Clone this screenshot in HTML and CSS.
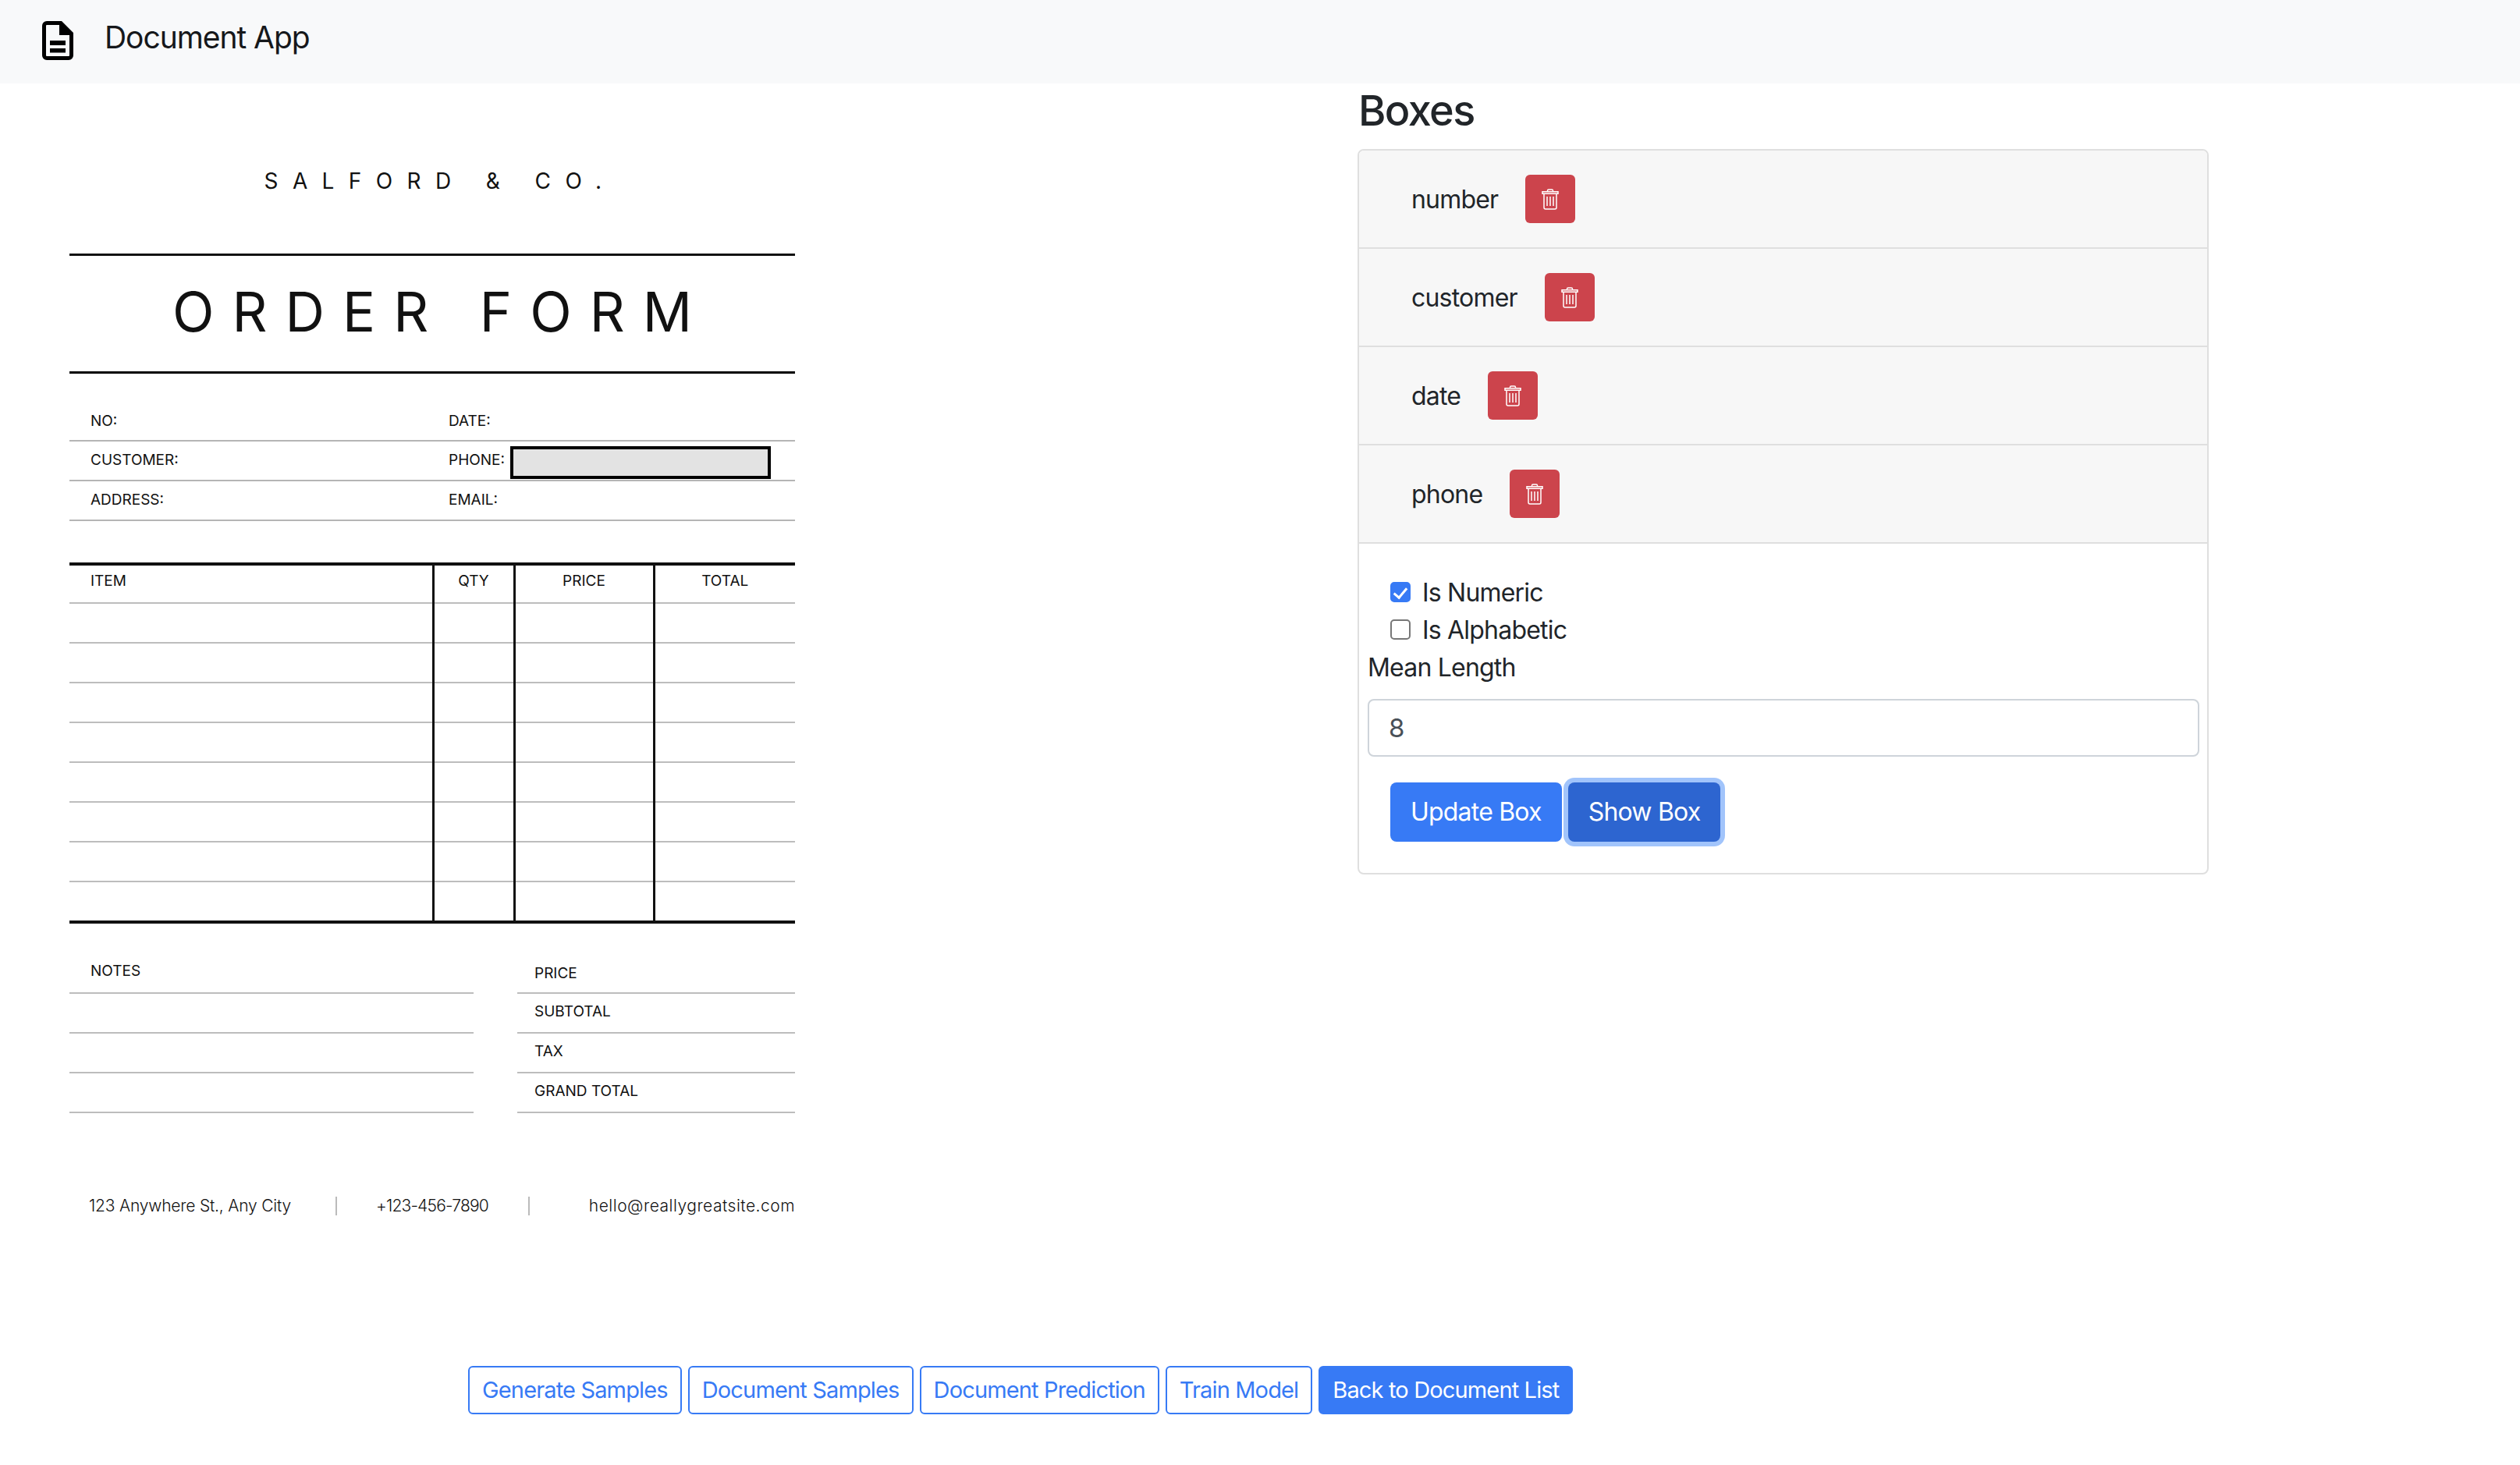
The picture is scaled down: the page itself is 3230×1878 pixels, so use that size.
FILE: index.html
```html
<!DOCTYPE html>
<html lang="en">
	<head>
		<meta charset="utf-8">
		<title>Document App</title>
		<link rel="stylesheet" href="styles.css">
	</head>
	<body>
		<svg class="sprites" width="0" height="0" aria-hidden="true">
			<symbol id="trash" viewBox="0 0 22 27">
				<path d="M1 3.8H21V6.2H1ZM7.5 3.8V2.5Q7.5 1 9 1H13Q14.5 1 14.5 2.5V3.8M3 6.2V24Q3 26 5 26H17Q19 26 19 24V6.2M7 10V22M11 10V22M15 10V22" fill="none" stroke="currentColor" stroke-width="1.5"/>
			</symbol>
		</svg>
		<nav class="navbar">
			<svg class="navbar-icon" viewBox="0 0 40 50" aria-hidden="true">
				<path fill-rule="evenodd" d="M6 0H25L40 15V44A6 6 0 0 1 34 50H6A6 6 0 0 1 0 44V6A6 6 0 0 1 6 0ZM6 5A1 1 0 0 0 5 6V44A1 1 0 0 0 6 45H34A1 1 0 0 0 35 44V18H22V5Z"/>
				<rect x="10" y="25" width="20" height="6"/>
				<rect x="10" y="35" width="20" height="5.5"/>
			</svg>
			<span class="navbar-title">Document App</span>
		</nav>

		<main class="workspace">
			<section class="sheet-col" aria-label="Document preview">
				<div class="sheet">
					<div class="sheet-brand">SALFORD &amp; CO.</div>
					<h1 class="sheet-title">ORDER FORM</h1>

					<div class="info">
						<div class="info-row"><span>NO:</span><span>DATE:</span></div>
						<div class="info-row"><span>CUSTOMER:</span><span>PHONE:</span></div>
						<div class="info-row"><span>ADDRESS:</span><span>EMAIL:</span></div>
						<div class="highlight"></div>
					</div>

					<table class="items">
						<thead>
							<tr><th class="item-col">ITEM</th><th>QTY</th><th>PRICE</th><th>TOTAL</th></tr>
						</thead>
						<tbody>
							<tr><td></td><td></td><td></td><td></td></tr>
							<tr><td></td><td></td><td></td><td></td></tr>
							<tr><td></td><td></td><td></td><td></td></tr>
							<tr><td></td><td></td><td></td><td></td></tr>
							<tr><td></td><td></td><td></td><td></td></tr>
							<tr><td></td><td></td><td></td><td></td></tr>
							<tr><td></td><td></td><td></td><td></td></tr>
							<tr><td></td><td></td><td></td><td></td></tr>
						</tbody>
					</table>

					<div class="summary">
						<div class="notes">
							<div>NOTES</div>
							<div></div>
							<div></div>
							<div></div>
						</div>
						<div class="totals">
							<div>PRICE</div>
							<div>SUBTOTAL</div>
							<div>TAX</div>
							<div>GRAND TOTAL</div>
						</div>
					</div>

					<div class="sheet-foot">
						<span class="foot-address">123 Anywhere St., Any City</span>
						<span class="foot-phone">+123-456-7890</span>
						<span class="foot-mail">hello@reallygreatsite.com</span>
					</div>
				</div>
			</section>

			<section class="boxes">
				<h2>Boxes</h2>
				<div class="card">
					<div class="box-row">
						<span>number</span>
						<button class="btn-delete" aria-label="Delete number"><svg><use href="#trash"/></svg></button>
					</div>
					<div class="box-row">
						<span>customer</span>
						<button class="btn-delete" aria-label="Delete customer"><svg><use href="#trash"/></svg></button>
					</div>
					<div class="box-row">
						<span>date</span>
						<button class="btn-delete" aria-label="Delete date"><svg><use href="#trash"/></svg></button>
					</div>
					<div class="box-row">
						<span>phone</span>
						<button class="btn-delete" aria-label="Delete phone"><svg><use href="#trash"/></svg></button>
					</div>
					<form class="box-form">
						<label class="check"><input type="checkbox" checked> Is Numeric</label>
						<label class="check"><input type="checkbox"> Is Alphabetic</label>
						<label class="field-label" for="mean-length">Mean Length</label>
						<input class="field" id="mean-length" type="text" value="8">
						<div class="form-actions">
							<button type="button" class="btn btn-primary">Update Box</button>
							<button type="button" class="btn btn-primary btn-focus">Show Box</button>
						</div>
					</form>
				</div>
			</section>
		</main>

		<div class="actions">
			<a class="link-btn" href="#">Generate Samples</a>
			<a class="link-btn" href="#">Document Samples</a>
			<a class="link-btn" href="#">Document Prediction</a>
			<a class="link-btn" href="#">Train Model</a>
			<a class="link-btn link-btn-solid" href="#">Back to Document List</a>
		</div>
	</body>
</html>
```

FILE: styles.css
```css
* {
	box-sizing: border-box;
}
body {
	margin: 0;
	background: #fff;
	color: #212529;
	font-family: Inter, "Liberation Sans", sans-serif;
	font-size: 32px;
	line-height: 48px;
	letter-spacing: -0.8px;
}
.sprites {
	position: absolute;
}

/* top bar */
.navbar {
	display: flex;
	align-items: center;
	height: 107px;
	padding: 0 0 3px 54px;
	background: #f8f9fa;
}
.navbar-icon {
	width: 40px;
	height: 50px;
	fill: #000;
}
.navbar-title {
	margin-left: 40px;
	margin-top: -9px;
	font-size: 39px;
	letter-spacing: -1.05px;
	color: #16181b;
}

.workspace {
	display: flex;
	height: 1644px;
}

/* order form preview */
.sheet-col {
	width: 1740px;
	padding-left: 89px;
}
.sheet {
	width: 930px;
	color: #111;
	font-size: 19px;
	line-height: 24px;
	letter-spacing: 0;
}
.sheet-brand {
	height: 218px;
	padding-top: 113px;
	padding-left: 20px;
	font-size: 28px;
	line-height: 24px;
	letter-spacing: 18.4px;
	text-align: center;
}
.sheet-title {
	height: 154px;
	margin: 0;
	padding-top: 30px;
	padding-left: 23px;
	border-top: 3px solid #111;
	border-bottom: 3px solid #000;
	font-size: 70px;
	font-weight: 400;
	line-height: 84px;
	letter-spacing: 23px;
	text-align: center;
}
.info {
	position: relative;
}
.info-row {
	display: grid;
	grid-template-columns: 459px 1fr;
	align-items: end;
	height: 51px;
	padding-left: 27px;
	padding-bottom: 13px;
	border-bottom: 2px solid #b5b5b5;
}
.info-row:first-child {
	height: 87px;
	padding-bottom: 12px;
}
.highlight {
	position: absolute;
	top: 93px;
	left: 565px;
	width: 334px;
	height: 42px;
	background: #e3e3e3;
	border: 4px solid #000;
}

.items {
	width: 100%;
	margin-top: 53px;
	border-collapse: collapse;
	table-layout: fixed;
	border-top: 4px solid #111;
	border-bottom: 4px solid #111;
}
.items th {
	width: 104px;
	height: 50px;
	padding: 8px 0 0;
	border-left: 3px solid #111;
	border-bottom: 2px solid #bdbdbd;
	font-weight: 400;
	vertical-align: top;
}
.items th:nth-child(3) {
	width: 179px;
}
.items th:nth-child(4) {
	width: 181px;
}
.items th.item-col {
	width: 466px;
	padding-left: 27px;
	border-left: 0;
	text-align: left;
}
.items td {
	height: 51px;
	padding: 0;
	border-left: 3px solid #111;
	border-bottom: 2px solid #bdbdbd;
}
.items td:first-child {
	border-left: 0;
}
.items tr:last-child td {
	height: 52px;
	border-bottom: 0;
}

.summary {
	display: flex;
	gap: 56px;
}
.notes {
	width: 518px;
}
.totals {
	width: 356px;
}
.notes div,
.totals div {
	height: 51px;
	padding: 4px 0 0 27px;
	border-bottom: 2px solid #bdbdbd;
}
.totals div {
	padding-left: 22px;
	padding-top: 11px;
}
.notes div:first-child,
.totals div:first-child {
	height: 90px;
	padding-top: 49px;
}
.totals div:first-child {
	padding-top: 52px;
}

.sheet-foot {
	display: grid;
	grid-template-columns: 341px 247px 342px;
	margin-top: 107px;
	font-size: 21px;
	font-weight: 300;
}
.foot-address {
	padding-left: 25px;
	letter-spacing: -0.2px;
}
.foot-phone {
	padding-left: 50px;
	border-left: 2px solid #bbb;
	letter-spacing: -0.8px;
}
.foot-mail {
	text-align: right;
	border-left: 2px solid #bbb;
	letter-spacing: 0.5px;
}

/* boxes panel */
.boxes {
	width: 1091px;
}
.boxes h2 {
	height: 84px;
	margin: 0 0 0 1px;
	font-size: 54px;
	font-weight: 500;
	line-height: 70px;
	letter-spacing: -1.6px;
}
.card {
	border: 2px solid #dfdfdf;
	border-radius: 8px;
	overflow: hidden;
}
.box-row {
	display: flex;
	align-items: center;
	gap: 35px;
	height: 126px;
	padding-left: 67px;
	background: #f7f7f7;
	border-bottom: 2px solid #dfdfdf;
}
.box-row span {
	padding-top: 2px;
}
.btn-delete {
	display: flex;
	align-items: center;
	justify-content: center;
	width: 64px;
	height: 62px;
	padding: 0;
	border: 0;
	border-radius: 6px;
	background: #cc444c;
	color: #fff;
}
.btn-delete svg {
	width: 22px;
	height: 27px;
}
.box-form {
	display: flex;
	flex-direction: column;
	align-items: flex-start;
	padding: 39px 10px 40px 11px;
}
.check {
	display: flex;
	align-items: center;
	gap: 15px;
	margin-left: 29px;
}
.check input {
	appearance: none;
	position: relative;
	width: 26px;
	height: 26px;
	margin: 0 0 3px;
	background: #fff;
	border: 2px solid #777;
	border-radius: 5px;
}
.check input:checked {
	background: #377af5;
	border-color: #377af5;
}
.check input:checked::after {
	content: "";
	position: absolute;
	top: 2px;
	left: 6px;
	width: 7px;
	height: 14px;
	border: solid #fff;
	border-width: 0 3px 3px 0;
	transform: rotate(40deg);
}
.field-label {
	margin-bottom: 16px;
}
.field {
	width: 100%;
	height: 74px;
	padding: 0 22px 0 25px;
	border: 2px solid #ced4da;
	border-radius: 8px;
	font: inherit;
	font-size: 33px;
	color: #495057;
}
.form-actions {
	display: flex;
	gap: 8px;
	margin: 33px 0 0 29px;
}
.btn {
	height: 76px;
	padding: 0 26px;
	border: 0;
	border-radius: 8px;
	font: inherit;
	letter-spacing: -0.8px;
	color: #fff;
}
.btn-primary {
	background: #377af5;
}
.btn-focus {
	background: #2d65d0;
	box-shadow: 0 0 0 6px #a1c4fb;
}

/* bottom links */
.actions {
	display: flex;
	gap: 8px;
	padding-left: 600px;
}
.link-btn {
	display: flex;
	align-items: center;
	height: 62px;
	padding: 0 16px;
	border: 2px solid #377af5;
	border-radius: 6px;
	color: #377af5;
	font-size: 29px;
	letter-spacing: -0.85px;
	text-decoration: none;
}
.link-btn-solid {
	background: #377af5;
	color: #fff;
}
```
